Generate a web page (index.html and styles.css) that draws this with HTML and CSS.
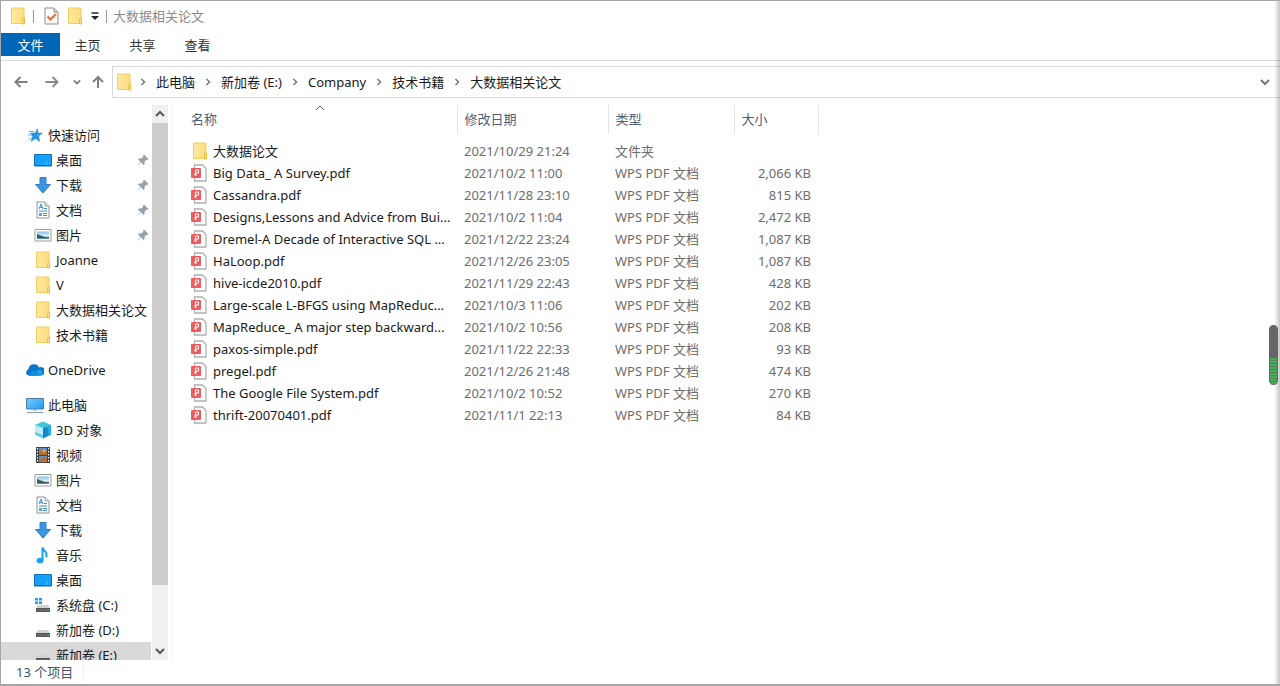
FILE: index.html
```html
<!DOCTYPE html>
<html lang="zh-CN">
<head>
<meta charset="utf-8">
<title>大数据相关论文</title>
<link rel="stylesheet" href="styles.css">
</head>
<body>
<svg class="sprite" aria-hidden="true">
  <defs>
    <linearGradient id="g-folder" x1="0" y1="0" x2="1" y2="0"><stop offset="0" stop-color="#ffe9a2"/><stop offset="1" stop-color="#fcdc7c"/></linearGradient>
    <linearGradient id="g-screen" x1="0" y1="0" x2="1" y2="1"><stop offset="0" stop-color="#7cc8fb"/><stop offset="1" stop-color="#1f9df5"/></linearGradient>
    <linearGradient id="g-photo" x1="0" y1="0" x2="0" y2="1"><stop offset="0" stop-color="#7fc0f0"/><stop offset=".55" stop-color="#dceef8"/><stop offset="1" stop-color="#4f8aa8"/></linearGradient>
  </defs>
  <symbol id="folder" viewBox="0 0 18 18"><path d="M2.500 1h12.500v15.500H2.500z" fill="url(#g-folder)" stroke="#f0cd62"/><path d="M13.500 17v-4.500l1-1.500h1v6z" fill="#ffe08a" stroke="#e8bf45"/></symbol>
  <symbol id="star" viewBox="0 0 18 18"><path d="M11.500 2l.8 4.800H17l-4 3.200 1 6-4.500-3.200L4.500 16l2-5.500L4 6.800h5z" fill="#2b93e4"/><path d="M3 5.500h5M2 9h4M2.500 13.500L6 12" stroke="#62b4ef"/><path d="M10.500 6l.5 2.500 3 .2-2.500 2" fill="#49b4f8"/></symbol>
  <symbol id="desktop" viewBox="0 0 18 18"><path d="M.5 3.500h17v11.500H.5z" fill="#16a0fb" stroke="#1271bd"/><path d="M1 14.500h16" stroke="#0b67b4"/><path d="M11 13h1m1 0h1m-1-2h1m1 2h1" stroke="#8dd2ff"/></symbol>
  <symbol id="down" viewBox="0 0 18 18"><path d="M6 1.500h6v7h4.500L9 17 1.500 8.500H6z" fill="#3b95e2" stroke="#2d7fca"/></symbol>
  <symbol id="doc" viewBox="0 0 18 18"><path d="M3 1h8l4 4v12H3z" fill="#fdfdfd" stroke="#8d9499"/><path d="M11 1v4h4" fill="#e1e6e9" stroke="#9aa1a5"/><path d="M5 8l2-5 2 5M5.500 6.500h3" fill="none" stroke="#3493d8"/><path d="M10 7.500h3M5 10h8M9 12.500h4M9 14.500h4" stroke="#438dbd"/><path d="M5 12h3v3H5z" fill="#51a8dd"/></symbol>
  <symbol id="photo" viewBox="0 0 18 18"><path d="M1 3.500h16v11.500H1z" fill="#fff" stroke="#9b9b9b"/><path d="M3 5.500h12v7.500H3z" fill="url(#g-photo)"/><path d="M3 8l4 1.500 4 1.500 4 .3v1H3z" fill="#385e65"/></symbol>
  <symbol id="cloud" viewBox="0 0 18 18"><path d="M1 14a4 4 0 0 1 1.500-6A5.500 5.500 0 0 1 13 6.500 4 4 0 0 1 17 14z" fill="#0877cc"/><path d="M4 15L13.500 8.500a4 4 0 0 1 2.500 6z" fill="#1fa3ea"/><path d="M2 14l5-5 9 5.500-13 .5z" fill="#118bdc"/></symbol>
  <symbol id="pc" viewBox="0 0 18 18"><path d="M.5 2.500h17v10.500H.5z" fill="url(#g-screen)" stroke="#4d7da3"/><path d="M7 14h4M1 16.500h16" stroke="#7d9cb8"/></symbol>
  <symbol id="cube" viewBox="0 0 18 18"><path d="M9 .5l8 3.500v9.500L9 17.500 1 13.500V4z" fill="#bdeef5"/><path d="M9 .5l8 3.500-8 3L1 4z" fill="#43c4dc"/><path d="M9 7l8-3v9.500l-8 4z" fill="#1588c9"/><path d="M13 6l4-2v9.500l-2 1z" fill="#26ace6"/><path d="M1 11l8 3v3.500l-8-4z" fill="#62cedf"/></symbol>
  <symbol id="film" viewBox="0 0 18 18"><path d="M2 1h14v16H2z" fill="#454545"/><path d="M5 2h8v7H5zm0 8h8v6H5z" fill="#5b8fc9"/><path d="M5 7l4-4 2 3 2-1v4H5zm1 8l3-4 4 1v3z" fill="#b86b2c"/><circle cx="10" cy="5" r="1.500" fill="#f2b441"/><path d="M3.500 2v14M14.500 2v14" stroke="#fff" stroke-dasharray="1.500 1.500"/></symbol>
  <symbol id="music" viewBox="0 0 18 18"><ellipse cx="6" cy="14.500" rx="3.500" ry="2.800" fill="#16a0f5"/><path d="M8.500 14V1.500c.5 3.500 6 4 3.500 9.500" fill="none" stroke="#16a0f5" stroke-width="2"/></symbol>
  <symbol id="drive" viewBox="0 0 18 18"><path d="M4 9h10l2 3H2z" fill="#d0d2d3"/><path d="M2 12h14v4H2z" fill="#555"/><path d="M3 14h9" stroke="#777"/><path d="M13 13.500h2v1h-2z" fill="#52e579"/></symbol>
  <symbol id="sysdrive" viewBox="0 0 18 18"><path d="M1 2h3v2.500H1zm4 0h3v2.500H5zM1 5.500h3V8H1zm4 0h3V8H5z" fill="#16a4f8"/><path d="M4 9h10l2 3H2z" fill="#d0d2d3"/><path d="M2 12h14v4H2z" fill="#555"/><path d="M3 14h9" stroke="#777"/><path d="M13 13.500h2v1h-2z" fill="#52e579"/></symbol>
  <symbol id="pin" viewBox="0 0 12 12"><path d="M7 .5L11.500 5l-1 .8-1-.1-2 2 .1 2.300-1 .9L4 8.300.8 11.500.5 11.200 3.500 8 1 5.500l1-1 2.300.1 2-2-.1-1.200z" fill="#95a1ab"/></symbol>
  <symbol id="pdf" viewBox="0 0 18 18"><path d="M4 1h7.500L15 4.500V17H3.500V1z" fill="#fff" stroke="#b0b0b0" stroke-width="1.300" stroke-linejoin="round"/><rect x="0" y="4" width="10" height="10" rx="1" fill="#ee5c60"/><path d="M4.500 9V6h3v3H5a1.300 1.300 0 1 0 0 2.600V9" fill="none" stroke="#fff"/></symbol>
  <symbol id="check" viewBox="0 0 18 18"><path d="M3 1h9l4 4v12H3z" fill="#fafafa" stroke="#8f8f8f"/><path d="M12 1v4h4" fill="#ddd" stroke="#8f8f8f"/><path d="M5.500 9.500l3 3L14 7" fill="none" stroke="#e0703f" stroke-width="2"/></symbol>
  <symbol id="left" viewBox="0 0 16 16"><path d="M14.500 8H2.500m5-5L2.500 8l5 5" fill="none" stroke="#808080" stroke-width="2"/></symbol>
  <symbol id="right" viewBox="0 0 16 16"><path d="M1.500 8H13.500M8.500 3l5 5-5 5" fill="none" stroke="#8a8a8a" stroke-width="2"/></symbol>
  <symbol id="up" viewBox="0 0 16 16"><path d="M8 14V3M3 8l5-5 5 5" fill="none" stroke="#808080" stroke-width="2"/></symbol>
  <symbol id="chev" viewBox="0 0 10 10"><path d="M1 3l4 4 4-4" fill="none" stroke="currentColor" stroke-width="2"/></symbol>
  <symbol id="chev-up" viewBox="0 0 10 10"><path d="M1 7l4-4 4 4" fill="none" stroke="currentColor" stroke-width="2"/></symbol>
  <symbol id="chev-right" viewBox="0 0 10 10"><path d="M3.500 2l3 3-3 3" fill="none" stroke="#777" stroke-width="1.500"/></symbol>
  <symbol id="sort" viewBox="0 0 10 6"><path d="M1 5l4-4 4 4" fill="none" stroke="#666"/></symbol>
  <symbol id="menu" viewBox="0 0 10 10"><path d="M1.500 2h7" stroke="#222" stroke-width="1.500"/><path d="M1 5h8L5 9z" fill="#222"/></symbol>
</svg>

<div class="window">
  <header class="titlebar">
    <svg class="icon"><use href="#folder"/></svg>
    <span class="divider"></span>
    <button class="tool" aria-label="属性"><svg class="icon"><use href="#check"/></svg></button>
    <button class="tool" aria-label="新建文件夹"><svg class="icon"><use href="#folder"/></svg></button>
    <button class="tool" aria-label="自定义快速访问工具栏"><svg class="mini"><use href="#menu"/></svg></button>
    <span class="divider"></span>
    <h1 class="title">大数据相关论文</h1>
  </header>

  <div class="tabs">
    <button class="tab tab-file">文件</button>
    <button class="tab">主页</button>
    <button class="tab">共享</button>
    <button class="tab">查看</button>
  </div>

  <div class="navbar">
    <div class="history">
      <button class="tool" aria-label="后退"><svg class="arrow"><use href="#left"/></svg></button>
      <button class="tool" aria-label="前进"><svg class="arrow"><use href="#right"/></svg></button>
      <button class="tool" aria-label="最近"><svg class="tiny"><use href="#chev"/></svg></button>
      <button class="tool" aria-label="向上"><svg class="arrow"><use href="#up"/></svg></button>
    </div>
    <div class="address">
      <svg class="icon"><use href="#folder"/></svg>
      <svg class="sep"><use href="#chev-right"/></svg>
      <a href="#">此电脑</a>
      <svg class="sep"><use href="#chev-right"/></svg>
      <a href="#">新加卷 (E:)</a>
      <svg class="sep"><use href="#chev-right"/></svg>
      <a href="#">Company</a>
      <svg class="sep"><use href="#chev-right"/></svg>
      <a href="#">技术书籍</a>
      <svg class="sep"><use href="#chev-right"/></svg>
      <a href="#">大数据相关论文</a>
      <button class="tool drop" aria-label="以前的位置"><svg class="mini"><use href="#chev"/></svg></button>
    </div>
  </div>

  <div class="body">
    <nav class="sidebar">
      <ul class="group">
        <li><a class="row root" href="#"><svg class="icon"><use href="#star"/></svg>快速访问</a></li>
        <li><a class="row" href="#"><svg class="icon"><use href="#desktop"/></svg>桌面<svg class="pin"><use href="#pin"/></svg></a></li>
        <li><a class="row" href="#"><svg class="icon"><use href="#down"/></svg>下载<svg class="pin"><use href="#pin"/></svg></a></li>
        <li><a class="row" href="#"><svg class="icon"><use href="#doc"/></svg>文档<svg class="pin"><use href="#pin"/></svg></a></li>
        <li><a class="row" href="#"><svg class="icon"><use href="#photo"/></svg>图片<svg class="pin"><use href="#pin"/></svg></a></li>
        <li><a class="row" href="#"><svg class="icon"><use href="#folder"/></svg>Joanne</a></li>
        <li><a class="row" href="#"><svg class="icon"><use href="#folder"/></svg>V</a></li>
        <li><a class="row" href="#"><svg class="icon"><use href="#folder"/></svg>大数据相关论文</a></li>
        <li><a class="row" href="#"><svg class="icon"><use href="#folder"/></svg>技术书籍</a></li>
      </ul>
      <ul class="group">
        <li><a class="row root" href="#"><svg class="icon"><use href="#cloud"/></svg>OneDrive</a></li>
      </ul>
      <ul class="group">
        <li><a class="row root" href="#"><svg class="icon"><use href="#pc"/></svg>此电脑</a></li>
        <li><a class="row" href="#"><svg class="icon"><use href="#cube"/></svg>3D 对象</a></li>
        <li><a class="row" href="#"><svg class="icon"><use href="#film"/></svg>视频</a></li>
        <li><a class="row" href="#"><svg class="icon"><use href="#photo"/></svg>图片</a></li>
        <li><a class="row" href="#"><svg class="icon"><use href="#doc"/></svg>文档</a></li>
        <li><a class="row" href="#"><svg class="icon"><use href="#down"/></svg>下载</a></li>
        <li><a class="row" href="#"><svg class="icon"><use href="#music"/></svg>音乐</a></li>
        <li><a class="row" href="#"><svg class="icon"><use href="#desktop"/></svg>桌面</a></li>
        <li><a class="row" href="#"><svg class="icon"><use href="#sysdrive"/></svg>系统盘 (C:)</a></li>
        <li><a class="row" href="#"><svg class="icon"><use href="#drive"/></svg>新加卷 (D:)</a></li>
        <li><a class="row selected" href="#"><svg class="icon"><use href="#drive"/></svg>新加卷 (E:)</a></li>
      </ul>
    </nav>
    <div class="scrollbar">
      <button class="tool scroll-btn" aria-label="向上滚动"><svg class="mini"><use href="#chev-up"/></svg></button>
      <div class="track"><div class="thumb"></div></div>
      <button class="tool scroll-btn" aria-label="向下滚动"><svg class="mini"><use href="#chev"/></svg></button>
    </div>
    <main class="content">
      <table class="files">
        <colgroup><col class="c-name"><col class="c-date"><col class="c-type"><col class="c-size"></colgroup>
        <thead>
          <tr><th>名称<svg class="sort"><use href="#sort"/></svg></th><th>修改日期</th><th>类型</th><th>大小</th></tr>
        </thead>
        <tbody>
          <tr><td><div class="file"><svg class="icon"><use href="#folder"/></svg>大数据论文</div></td><td>2021/10/29 21:24</td><td>文件夹</td><td></td></tr>
          <tr><td><div class="file"><svg class="icon"><use href="#pdf"/></svg>Big Data_ A Survey.pdf</div></td><td>2021/10/2 11:00</td><td>WPS PDF 文档</td><td>2,066 KB</td></tr>
          <tr><td><div class="file"><svg class="icon"><use href="#pdf"/></svg>Cassandra.pdf</div></td><td>2021/11/28 23:10</td><td>WPS PDF 文档</td><td>815 KB</td></tr>
          <tr><td><div class="file"><svg class="icon"><use href="#pdf"/></svg>Designs,Lessons and Advice from Bui...</div></td><td>2021/10/2 11:04</td><td>WPS PDF 文档</td><td>2,472 KB</td></tr>
          <tr><td><div class="file"><svg class="icon"><use href="#pdf"/></svg>Dremel-A Decade of Interactive SQL ...</div></td><td>2021/12/22 23:24</td><td>WPS PDF 文档</td><td>1,087 KB</td></tr>
          <tr><td><div class="file"><svg class="icon"><use href="#pdf"/></svg>HaLoop.pdf</div></td><td>2021/12/26 23:05</td><td>WPS PDF 文档</td><td>1,087 KB</td></tr>
          <tr><td><div class="file"><svg class="icon"><use href="#pdf"/></svg>hive-icde2010.pdf</div></td><td>2021/11/29 22:43</td><td>WPS PDF 文档</td><td>428 KB</td></tr>
          <tr><td><div class="file"><svg class="icon"><use href="#pdf"/></svg>Large-scale L-BFGS using MapReduc...</div></td><td>2021/10/3 11:06</td><td>WPS PDF 文档</td><td>202 KB</td></tr>
          <tr><td><div class="file"><svg class="icon"><use href="#pdf"/></svg>MapReduce_ A major step backward...</div></td><td>2021/10/2 10:56</td><td>WPS PDF 文档</td><td>208 KB</td></tr>
          <tr><td><div class="file"><svg class="icon"><use href="#pdf"/></svg>paxos-simple.pdf</div></td><td>2021/11/22 22:33</td><td>WPS PDF 文档</td><td>93 KB</td></tr>
          <tr><td><div class="file"><svg class="icon"><use href="#pdf"/></svg>pregel.pdf</div></td><td>2021/12/26 21:48</td><td>WPS PDF 文档</td><td>474 KB</td></tr>
          <tr><td><div class="file"><svg class="icon"><use href="#pdf"/></svg>The Google File System.pdf</div></td><td>2021/10/2 10:52</td><td>WPS PDF 文档</td><td>270 KB</td></tr>
          <tr><td><div class="file"><svg class="icon"><use href="#pdf"/></svg>thrift-20070401.pdf</div></td><td>2021/11/1 22:13</td><td>WPS PDF 文档</td><td>84 KB</td></tr>
        </tbody>
      </table>
    </main>
  </div>

  <footer class="status"><span>13 个项目</span></footer>
  <div class="edge"></div>
  <div class="meter"><div class="level"></div></div>
</div>
</body>
</html>
```
FILE: styles.css
```css
* { box-sizing: border-box; }

body {
  margin: 0;
  background: #fff;
  color: #1a1a1a;
  font: 13px/20px "Noto Sans", "Noto Sans CJK SC", sans-serif;
}

a { color: inherit; text-decoration: none; }
ul { list-style: none; margin: 0; padding: 0; }
svg { display: block; flex: none; }

.sprite { position: absolute; width: 0; height: 0; }
.icon { width: 18px; height: 18px; }
.mini { width: 10px; height: 10px; }
.tiny { width: 8px; height: 8px; }
.arrow { width: 16px; height: 16px; }

.window {
  position: relative;
  display: flex;
  flex-direction: column;
  height: 100vh;
  border: solid #a6a6a6;
  border-width: 1px 0 2px 1px;
}

.tool {
  display: flex;
  align-items: center;
  justify-content: center;
  padding: 0;
  border: 0;
  background: none;
  color: #777;
}

.titlebar {
  display: flex;
  align-items: center;
  gap: 6px;
  height: 32px;
  padding: 0 0 2px 8px;
}
.divider { width: 1px; height: 13px; background: #999; }
.title { margin: 0; color: #8c8c8c; font-size: 13px; font-weight: 400; }
.titlebar .tool { margin-left: 2px; }
.titlebar .tool + .tool { margin-left: 0; }

.tabs {
  display: flex;
  height: 28px;
  padding-bottom: 4px;
  border-bottom: 1px solid #dadada;
}
.tab {
  width: 55px;
  padding: 0;
  border: 0;
  background: none;
  color: #333;
  font: inherit;
}
.tab-file { width: 59px; background: #0067b8; color: #fff; }

.navbar { display: flex; padding-top: 5px; }
.history {
  display: flex;
  align-items: center;
  gap: 15px;
  width: 111px;
  padding-left: 12px;
}
.history .tool:nth-child(n + 3) { margin-left: -2px; }
.history .tool:last-child { margin-left: -6px; }
.address {
  display: flex;
  flex: 1;
  align-items: center;
  height: 32px;
  padding: 0 10px 0 2px;
  border: 1px solid #d9d9d9;
  border-right: 0;
}
.sep { width: 10px; height: 10px; margin: 0 8px; }
.address .icon + .sep { margin-left: 5px; }
.drop { margin-left: auto; }

.body { display: flex; flex: 1; min-height: 0; padding-top: 7px; }
.sidebar { width: 151px; padding-top: 17px; overflow: hidden; }
.group { margin-bottom: 10px; }
.row {
  display: flex;
  align-items: center;
  gap: 4px;
  height: 25px;
  margin-right: 1px;
  padding-left: 33px;
  white-space: nowrap;
}
.root { padding-left: 25px; }
.selected { background: #d9d9d9; }
.pin { width: 12px; height: 12px; margin: 0 2px 0 auto; }

.scrollbar {
  display: flex;
  flex-direction: column;
  width: 16px;
  background: #f0f0f0;
}
.scroll-btn { height: 18px; color: #555; }
.track { flex: 1; }
.thumb { height: 89%; background: #cdcdcd; }

.content {
  flex: 1;
  margin-left: 3px;
  padding-left: 12px;
  border-left: 1px solid #f3f3f3;
}
.files { table-layout: fixed; width: 634px; border-collapse: collapse; }
.c-name { width: 273px; }
.c-date { width: 151px; }
.c-type { width: 126px; }
.c-size { width: 84px; }
.files th {
  position: relative;
  height: 29px;
  padding: 0 7px 2px;
  border-right: 1px solid #e5e5e5;
  color: #4c607a;
  font-weight: 400;
  text-align: left;
}
.sort {
  position: absolute;
  top: 0;
  left: calc(50% - 5px);
  width: 10px;
  height: 6px;
}
.files tbody::before { content: ""; display: block; height: 6px; }
.files td {
  height: 22px;
  padding: 0 7px;
  color: #6d6d6d;
  white-space: nowrap;
}
.files td:last-child { text-align: right; }
.file { display: flex; align-items: center; gap: 4px; color: #1a1a1a; }

.status { height: 24px; padding: 2px 0 0 15px; color: #3f546e; }
.status span { padding-right: 10px; border-right: 1px solid #f0f0f0; }

.edge {
  position: absolute;
  top: 0;
  right: 0;
  bottom: 0;
  width: 6px;
  background: linear-gradient(to right, transparent, rgba(0, 0, 0, .22));
}
.meter {
  position: absolute;
  top: 324px;
  right: 2px;
  display: flex;
  align-items: flex-end;
  width: 9px;
  height: 60px;
  padding: 1px;
  border-radius: 5px;
  background: #666;
  overflow: hidden;
}
.level {
  width: 100%;
  height: 26px;
  border-radius: 0 0 4px 4px;
  background: repeating-linear-gradient(#43ad5c 0 2px, #5c7c62 2px 3px);
}
```
